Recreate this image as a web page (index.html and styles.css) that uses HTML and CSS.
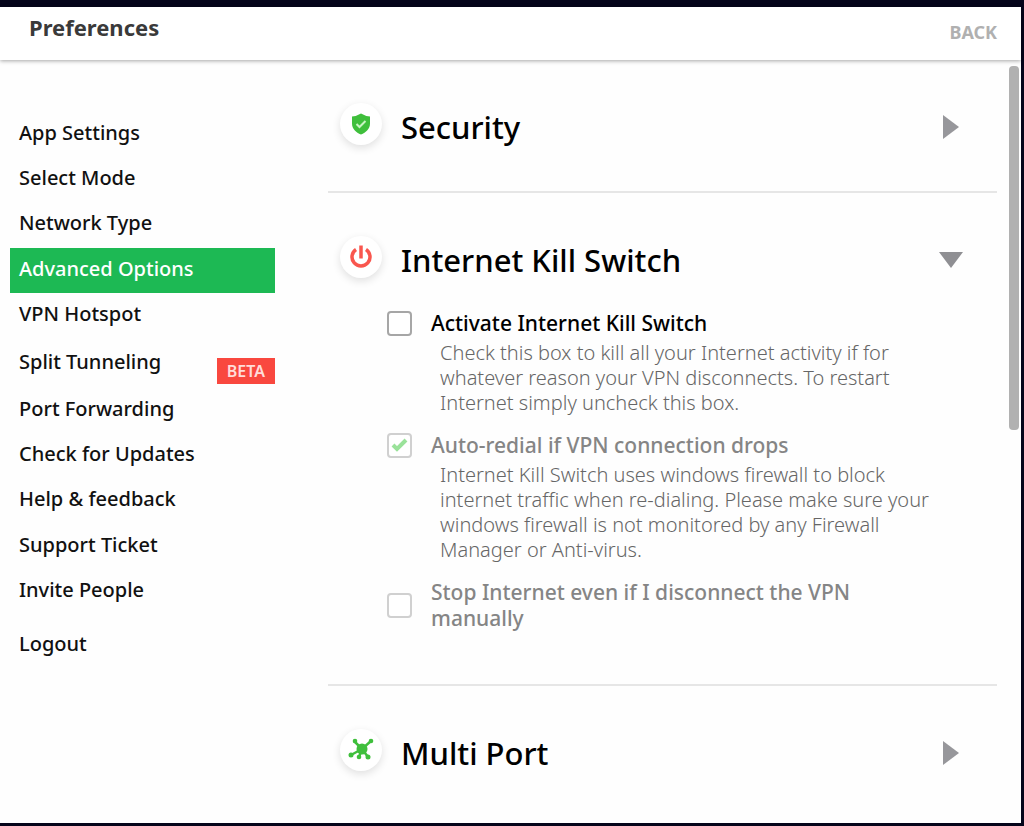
FILE: index.html
```html
<!DOCTYPE html>
<html lang="en">
<head>
    <meta charset="UTF-8">
    <meta name="viewport" content="width=device-width, initial-scale=1.0">
    <title>Preferences</title>
    <link rel="stylesheet" href="styles.css">
</head>
<body>
    <div class="window">
        <header class="header">
            <h1>Preferences</h1>
            <button type="button" class="back-btn">BACK</button>
        </header>

        <div class="main">
            <nav class="sidebar">
                <ul class="menu">
                    <li><a href="#">App Settings</a></li>
                    <li><a href="#">Select Mode</a></li>
                    <li><a href="#">Network Type</a></li>
                    <li><a href="#" class="active">Advanced Options</a></li>
                    <li><a href="#">VPN Hotspot</a></li>
                    <li><a href="#">Split Tunneling <span class="badge">BETA</span></a></li>
                    <li><a href="#">Port Forwarding</a></li>
                    <li><a href="#">Check for Updates</a></li>
                    <li><a href="#">Help &amp; feedback</a></li>
                    <li><a href="#">Support Ticket</a></li>
                    <li><a href="#">Invite People</a></li>
                </ul>
                <a href="#" class="logout">Logout</a>
            </nav>

            <main class="content">
                <section class="panel">
                    <button type="button" class="panel-head">
                        <span class="icon">
                            <svg width="22" height="22" viewBox="0 0 22 22">
                                <path d="M11 0.500 Q15 3 20 3.500 V10.500 C20 16 16 19.500 11 21.500 C6 19.500 2 16 2 10.500 V3.500 Q7 3 11 0.500 Z" fill="#3fbf3c"/>
                                <path d="M6.500 11 L9.500 14 L15.500 8" fill="none" stroke="#c9f5c4" stroke-width="2"/>
                            </svg>
                        </span>
                        <span class="title">Security</span>
                        <svg class="arrow" width="18" height="24" viewBox="0 0 18 24"><path d="M2 0 L18 12 L2 24 Z" fill="#97979b"/></svg>
                    </button>
                </section>

                <section class="panel">
                    <button type="button" class="panel-head">
                        <span class="icon">
                            <svg width="22" height="24" viewBox="0 0 22 24">
                                <path d="M6 4.500 A9 9 0 1 0 16 4.500" fill="none" stroke="#f9564e" stroke-width="3.500"/>
                                <path d="M11 0.500 V13.500" stroke="#f9564e" stroke-width="3.500"/>
                            </svg>
                        </span>
                        <span class="title">Internet Kill Switch</span>
                        <svg class="arrow down" width="24" height="16" viewBox="0 0 24 16"><path d="M0 0 H24 L12 16 Z" fill="#8f8f93"/></svg>
                    </button>

                    <div class="options">
                        <div class="option">
                            <input type="checkbox" id="kill-switch">
                            <label for="kill-switch">Activate Internet Kill Switch</label>
                            <p>Check this box to kill all your Internet activity if for whatever reason your VPN disconnects. To restart Internet simply uncheck this box.</p>
                        </div>
                        <div class="option disabled">
                            <input type="checkbox" id="auto-redial" checked disabled>
                            <label for="auto-redial">Auto-redial if VPN connection drops</label>
                            <p>Internet Kill Switch uses windows firewall to block internet traffic when re-dialing. Please make sure your windows firewall is not monitored by any Firewall Manager or Anti-virus.</p>
                        </div>
                        <div class="option disabled">
                            <input type="checkbox" id="stop-internet" disabled>
                            <label for="stop-internet">Stop Internet even if I disconnect the VPN manually</label>
                        </div>
                    </div>
                </section>

                <section class="panel">
                    <button type="button" class="panel-head">
                        <span class="icon">
                            <svg width="26" height="24" viewBox="0 0 26 24">
                                <path d="M6 3 L14 11 L23 3 M14 11 L3 17 M14 11 L11 19 M14 11 L20 19" fill="none" stroke="#3fbf3c" stroke-width="2.500"/>
                                <g fill="#3fbf3c">
                                    <circle cx="14" cy="11" r="5.500"/>
                                    <circle cx="7" cy="3" r="2.300"/>
                                    <circle cx="23" cy="3" r="2.300"/>
                                    <circle cx="3" cy="17" r="2.500"/>
                                    <circle cx="11" cy="19" r="2.300"/>
                                    <circle cx="20" cy="19" r="2.500"/>
                                </g>
                            </svg>
                        </span>
                        <span class="title">Multi Port</span>
                        <svg class="arrow" width="18" height="24" viewBox="0 0 18 24"><path d="M2 0 L18 12 L2 24 Z" fill="#97979b"/></svg>
                    </button>
                </section>
            </main>

            <div class="scrollbar"><div class="thumb"></div></div>
        </div>
    </div>
</body>
</html>
```

FILE: styles.css
```css
* {
    box-sizing: border-box;
}

body {
    margin: 0;
    padding: 7px 3px 3px 0;
    min-height: 100vh;
    display: flex;
    background: #04041a;
    font-family: "Noto Sans", "Open Sans", sans-serif;
    color: #111;
}

a {
    color: inherit;
    text-decoration: none;
}

button {
    padding: 0;
    border: none;
    background: none;
    font-family: inherit;
    color: inherit;
    cursor: pointer;
}

.window {
    flex: 1;
    display: flex;
    flex-direction: column;
    background: #fefefe;
}

.header {
    display: flex;
    justify-content: space-between;
    height: 53px;
    padding: 6px 24px 0 29px;
    background: #fff;
    box-shadow: 0 1px 4px rgba(0, 0, 0, 0.35);
}

.header h1 {
    margin: 0;
    font-size: 22px;
    line-height: 28px;
    font-weight: 700;
    color: #3a3a3a;
}

.back-btn {
    height: 38px;
    font-size: 18px;
    font-weight: 700;
    color: #b0b0b0;
}

.main {
    flex: 1;
    display: flex;
}

.sidebar {
    width: 275px;
    padding: 52px 0 0 10px;
    font-size: 20px;
    font-weight: 500;
}

.menu {
    display: grid;
    grid-auto-rows: 1fr;
    height: 502px;
    margin: 0;
    padding: 0;
    list-style: none;
}

.menu a,
.logout {
    display: flex;
    justify-content: space-between;
    align-items: center;
    height: 100%;
    padding: 0 0 4px 9px;
}

.menu .active {
    background: #1db954;
    color: #fff;
}

.badge {
    margin-top: 20px;
    padding: 0 10px;
    background: #f9483f;
    color: #ffdcd9;
    font-size: 16px;
    line-height: 26px;
    font-weight: 600;
}

.logout {
    height: 46px;
    margin-top: 8px;
}

.content {
    flex: 1;
    margin: 0 12px 0 53px;
}

.panel {
    padding: 39px 38px 36px 7px;
    border-bottom: 2px solid #e6e6e6;
}

.panel:last-child {
    border-bottom: none;
}

.panel-head {
    display: flex;
    align-items: center;
    width: 100%;
    height: 56px;
    text-align: left;
}

.icon {
    display: flex;
    justify-content: center;
    align-items: center;
    width: 42px;
    height: 42px;
    margin: 0 19px 6px 5px;
    border-radius: 50%;
    background: #fff;
    box-shadow: 0 3px 8px rgba(0, 0, 0, 0.12);
}

.title {
    flex: 1;
    font-size: 31px;
    font-weight: 500;
    color: #000;
}

.arrow.down {
    margin-right: -4px;
}

.options {
    display: flex;
    flex-direction: column;
    gap: 17px;
    padding: 22px 16px 17px 52px;
}

.option {
    display: grid;
    grid-template-columns: 25px 1fr;
    column-gap: 19px;
    align-items: center;
}

.option input {
    appearance: none;
    width: 25px;
    height: 25px;
    margin: 0;
    border: 2px solid #a6a6a6;
    border-radius: 4px;
    background: #fff;
}

.option input:disabled {
    border-color: #d0d0d0;
}

.option input:checked {
    background: #fff url("data:image/svg+xml,%3Csvg xmlns='http://www.w3.org/2000/svg' viewBox='0 0 21 21'%3E%3Cpath d='M4 10 L8 14 L17 5' fill='none' stroke='%239ae29a' stroke-width='4'/%3E%3C/svg%3E") center no-repeat;
}

.option label {
    font-size: 21px;
    line-height: 26px;
    font-weight: 500;
    color: #000;
}

.option.disabled label {
    color: #858585;
}

.option p {
    grid-column: 2;
    margin: 4px 0 0 9px;
    font-size: 20px;
    line-height: 25px;
    font-weight: 300;
    color: #666;
}

.scrollbar {
    width: 12px;
    padding-top: 6px;
}

.thumb {
    width: 10px;
    height: 364px;
    border-radius: 4px;
    background: #b1b1b1;
}
```
